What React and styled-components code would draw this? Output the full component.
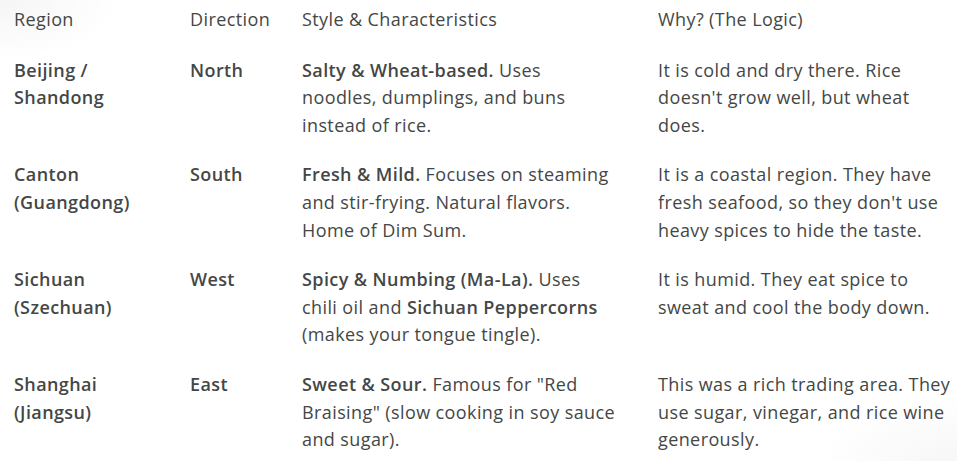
import React from 'react'
import styled, { createGlobalStyle } from 'styled-components'

const Global = createGlobalStyle`
    body {
        margin: 0;
        background:
            radial-gradient(ellipse 120px 60px at 0 0, rgba(0,0,0,0.04), transparent),
            radial-gradient(ellipse 140px 70px at 100% 100%, rgba(0,0,0,0.035), transparent),
            #fff;
        min-height: 461px;
        font-family: "Open Sans", Roboto, sans-serif;
        color: #444746;
        overflow: hidden;
    }
`

const Table = styled.table`
    border-collapse: collapse;
    margin: 6px 0 0 14px;
    font-size: 18px;
    letter-spacing: 0.4px;
    line-height: 27.6px;
    table-layout: fixed;
    width: 943px;
`

const Head = styled.th`
    font-weight: 400;
    text-align: left;
    vertical-align: top;
    padding: 0 0 12px 0;
    width: ${props => props.w}px;
`

const Cell = styled.td`
    vertical-align: top;
    padding: 11px ${props => props.pr || 0}px 11px 0;
    font-weight: ${props => props.strong ? 600 : 400};
`

const B = styled.b`
    font-weight: 600;
`

const rows = [
    {
        region: 'Beijing / Shandong',
        dir: 'North',
        style: <><B>Salty &amp; Wheat-based.</B> Uses noodles, dumplings, and buns instead of rice.</>,
        why: "It is cold and dry there. Rice doesn't grow well, but wheat does."
    },
    {
        region: 'Canton (Guangdong)',
        dir: 'South',
        style: <><B>Fresh &amp; Mild.</B> Focuses on steaming and stir-frying. Natural flavors. Home of Dim Sum.</>,
        why: "It is a coastal region. They have fresh seafood, so they don't use heavy spices to hide the taste."
    },
    {
        region: 'Sichuan (Szechuan)',
        dir: 'West',
        style: <><B>Spicy &amp; Numbing (Ma-La).</B> Uses chili oil and <B>Sichuan Peppercorns</B> (makes your tongue tingle).</>,
        why: 'It is humid. They eat spice to sweat and cool the body down.'
    },
    {
        region: 'Shanghai (Jiangsu)',
        dir: 'East',
        style: <><B>Sweet &amp; Sour.</B> Famous for "Red Braising" (slow cooking in soy sauce and sugar).</>,
        why: 'This was a rich trading area. They use sugar, vinegar, and rice wine generously.'
    }
]

const App = () => {
  return (
    <>
        <Global />
        <Table>
            <thead>
                <tr>
                    <Head w={176}>Region</Head>
                    <Head w={112}>Direction</Head>
                    <Head w={356}>Style &amp; Characteristics</Head>
                    <Head w={299}>Why? (The Logic)</Head>
                </tr>
            </thead>
            <tbody>
                {rows.map(r => (
                    <tr key={r.dir}>
                        <Cell strong pr={26}>{r.region}</Cell>
                        <Cell strong>{r.dir}</Cell>
                        <Cell pr={41}>{r.style}</Cell>
                        <Cell>{r.why}</Cell>
                    </tr>
                ))}
            </tbody>
        </Table>
    </>
  )
}

export default App
